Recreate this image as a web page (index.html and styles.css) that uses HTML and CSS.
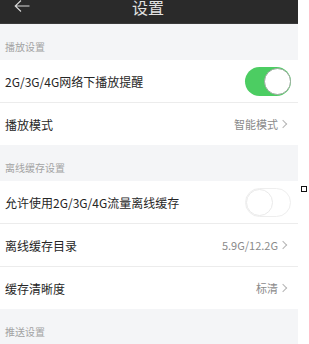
FILE: index.html
```html
<!DOCTYPE html>
<html lang="zh-CN">
<head>
<meta charset="utf-8">
<title>设置</title>
<link rel="stylesheet" href="styles.css">
</head>
<body>
<div class="page">
  <div class="screen">
    <header class="topbar">
      <svg class="back" width="16" height="12" viewBox="0 0 16 12">
        <path d="M7 0.5 L1.2 6 L7 11.5 M1.2 6 H15.5" fill="none" stroke="#d8d8d8" stroke-width="1.1"/>
      </svg>
      <div class="title">设置</div>
    </header>

    <div class="section">播放设置</div>
    <div class="group">
      <div class="row">
        <span class="label">2G/3G/4G网络下播放提醒</span>
        <span class="toggle on"><span class="knob"></span></span>
      </div>
      <div class="row">
        <span class="label">播放模式</span>
        <span class="value">智能模式<span class="chev"></span></span>
      </div>
    </div>

    <div class="section">离线缓存设置</div>
    <div class="group">
      <div class="row">
        <span class="label">允许使用2G/3G/4G流量离线缓存</span>
        <span class="toggle off"><span class="knob"></span></span>
      </div>
      <div class="row">
        <span class="label">离线缓存目录</span>
        <span class="value">5.9G/12.2G<span class="chev"></span></span>
      </div>
      <div class="row">
        <span class="label">缓存清晰度</span>
        <span class="value">标清<span class="chev"></span></span>
      </div>
    </div>

    <div class="section">推送设置</div>
  </div>
  <div class="side">
    <span class="marker"></span>
  </div>
</div>
</body>
</html>
```

FILE: styles.css
```css
html, body {
  margin: 0;
  padding: 0;
  background: #ffffff;
}
body {
  font-family: "Noto Sans CJK SC", "Noto Sans", sans-serif;
  width: 309px;
  height: 344px;
  overflow: hidden;
}
.page {
  display: flex;
  width: 309px;
}
.screen {
  width: 298px;
  flex: none;
  background: #f4f5f7;
}
.side {
  flex: 1;
  padding: 186px 0 0 3px;
}
.marker {
  display: block;
  width: 4px;
  height: 4px;
  border: 1px solid #111;
}
.topbar {
  height: 24px;
  background: #2a2a2a;
  border-bottom: 1px solid #3a3a3a;
  box-sizing: border-box;
  display: flex;
  align-items: flex-start;
  justify-content: center;
  position: relative;
}
.back {
  position: absolute;
  left: 14px;
  top: 0px;
}
.title {
  color: #e2e2e2;
  font-size: 16px;
  line-height: 14px;
  margin-left: -2px;
}
.section {
  height: 36px;
  box-sizing: border-box;
  padding: 16px 0 0 5px;
  font-size: 10px;
  line-height: 14px;
  color: #a3a3a3;
}
.group {
  background: #ffffff;
}
.row {
  height: 42px;
  display: flex;
  align-items: center;
  justify-content: space-between;
  padding: 0 11px 0 5px;
  border-top: 1px solid #ececec;
}
.row:first-child {
  border-top: 0;
}
.label {
  font-size: 12px;
  color: #262626;
}
.value {
  font-size: 11px;
  color: #8a8a8a;
  display: flex;
  align-items: center;
}
.chev {
  display: inline-block;
  width: 5px;
  height: 5px;
  border-top: 1px solid #b5b5b5;
  border-right: 1px solid #b5b5b5;
  transform: rotate(45deg);
  margin-left: 2px;
  margin-right: 1px;
}
.toggle {
  width: 46px;
  height: 29px;
  border-radius: 15px;
  box-sizing: border-box;
  position: relative;
  margin-right: -4px;
}
.toggle.on {
  background: #4ccd62;
}
.toggle.off {
  background: #ffffff;
  border: 1px solid #eeeeee;
}
.knob {
  position: absolute;
  top: 1px;
  width: 27px;
  height: 27px;
  border-radius: 50%;
  background: #ffffff;
  box-sizing: border-box;
  border: 1px solid #d9d9d9;
}
.toggle.on .knob {
  right: 0;
  border-color: #9aa89c;
}
.toggle.off .knob {
  top: 0;
  left: 0;
  border-color: #eaeaea;
}
```
